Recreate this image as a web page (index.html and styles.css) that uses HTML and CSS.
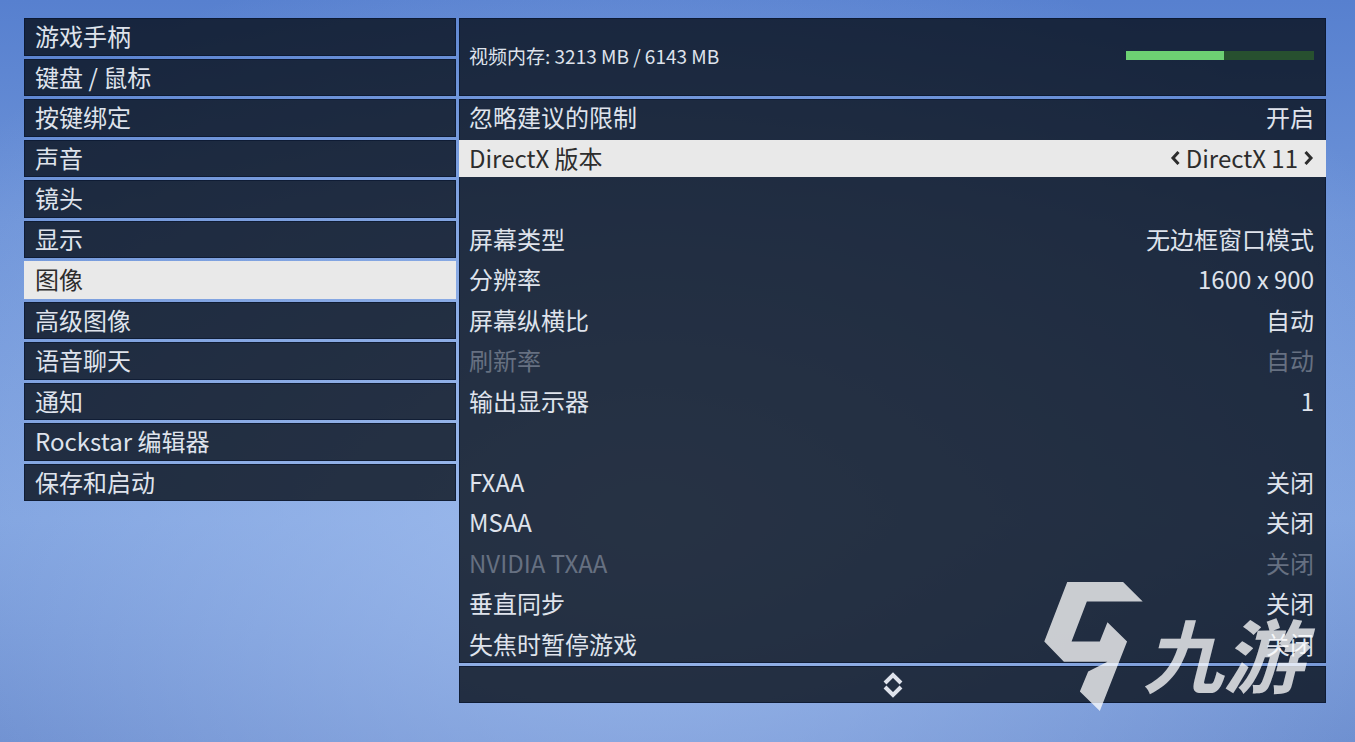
FILE: index.html
```
<!DOCTYPE html>
<html lang="zh-CN">
  <head>
    <meta charset="utf-8">
    <title>图像</title>
    <link rel="stylesheet" href="styles.css">
  </head>
  <body>
    <div class="settings">
      <nav class="menu">
        <button class="menu-item">游戏手柄</button>
        <button class="menu-item">键盘 / 鼠标</button>
        <button class="menu-item">按键绑定</button>
        <button class="menu-item">声音</button>
        <button class="menu-item">镜头</button>
        <button class="menu-item">显示</button>
        <button class="menu-item active">图像</button>
        <button class="menu-item">高级图像</button>
        <button class="menu-item">语音聊天</button>
        <button class="menu-item">通知</button>
        <button class="menu-item">Rockstar 编辑器</button>
        <button class="menu-item">保存和启动</button>
      </nav>

      <main class="content">
        <div class="memory panel">
          <label for="memory-bar">视频内存: 3213 MB / 6143 MB</label>
          <progress id="memory-bar" value="3213" max="6143"></progress>
        </div>

        <div class="options panel">
          <button class="option"><span>忽略建议的限制</span><span>开启</span></button>
          <div class="option active">
            <span>DirectX 版本</span>
            <div class="picker">
              <button class="arrow" aria-label="上一个">
                <svg width="10" height="14" viewBox="0 0 10 14"><path d="M8.500 1 3 7l5.500 6"/></svg>
              </button>
              <span>DirectX 11</span>
              <button class="arrow" aria-label="下一个">
                <svg width="10" height="14" viewBox="0 0 10 14"><path d="M1.500 1 7 7l-5.500 6"/></svg>
              </button>
            </div>
          </div>
          <div class="spacer"></div>
          <button class="option"><span>屏幕类型</span><span>无边框窗口模式</span></button>
          <button class="option"><span>分辨率</span><span>1600 x 900</span></button>
          <button class="option"><span>屏幕纵横比</span><span>自动</span></button>
          <button class="option" disabled><span>刷新率</span><span>自动</span></button>
          <button class="option"><span>输出显示器</span><span>1</span></button>
          <div class="spacer"></div>
          <button class="option"><span>FXAA</span><span>关闭</span></button>
          <button class="option"><span>MSAA</span><span>关闭</span></button>
          <button class="option" disabled><span>NVIDIA TXAA</span><span>关闭</span></button>
          <button class="option"><span>垂直同步</span><span>关闭</span></button>
          <button class="option"><span>失焦时暂停游戏</span><span>关闭</span></button>
        </div>

        <button class="scroll panel" aria-label="滚动">
          <svg width="20" height="26" viewBox="0 0 20 26"><path d="M2 11 10 3l8 8M2 15l8 8 8-8"/></svg>
        </button>
      </main>
    </div>

    <div class="watermark">
      <svg width="99" height="129" viewBox="43 66 296 388">
        <path d="M112 66H280L339 125H171L125 245H210L233 187 292 245 210 454 150 395 175 335 233 306H102L43 245Z"/>
      </svg>
      <span>九游</span>
    </div>
  </body>
</html>
```

FILE: styles.css
```
* {
  box-sizing: border-box;
}

body {
  position: relative;
  min-height: 100vh;
  margin: 0;
  padding: 18px 29px 39px 24px;
  background:
    radial-gradient(ellipse 65% 80% at 48% 70%, rgba(164, 192, 240, 0.85), rgba(140, 172, 230, 0) 100%),
    linear-gradient(to bottom, #5780cf 0%, #6d93d8 30%, #7b9fdd 70%, #698bcd 100%);
  color: #dfe3ec;
  font-family: "Noto Sans CJK SC", sans-serif;
  font-size: 24px;
  line-height: 34px;
}

button {
  padding: 0;
  border: 0;
  background: none;
  color: inherit;
  font: inherit;
  text-align: left;
  cursor: pointer;
}

svg {
  display: block;
}

.settings {
  display: grid;
  grid-template-columns: 432fr 867fr;
  gap: 3px;
  align-items: start;
}

.menu {
  display: grid;
  grid-auto-rows: 1fr;
  gap: 3px;
  min-height: 483px;
}

.menu-item,
.panel {
  background-color: rgba(5, 12, 20, 0.78);
  box-shadow: inset 0 0 0 1px rgba(5, 18, 45, 0.6);
}

.menu-item {
  padding: 0 11px 1px;
}

.content {
  display: grid;
  gap: 3px;
}

.memory {
  display: flex;
  align-items: center;
  justify-content: space-between;
  height: 78px;
  padding: 0 12px 3px 10px;
  font-size: 19px;
}

progress {
  width: 188px;
  height: 9px;
  border: 0;
  appearance: none;
  background-color: #27502f;
}
progress::-webkit-progress-bar {
  background-color: #27502f;
}
progress::-webkit-progress-value {
  background-color: #6dd073;
}

.options {
  display: grid;
  grid-auto-rows: 1fr;
  gap: 3px;
  min-height: 564px;
}

.option {
  display: flex;
  align-items: center;
  justify-content: space-between;
  padding: 0 12px 1px 10px;
}
.option:disabled {
  color: #667081;
  cursor: default;
}

.menu-item.active,
.option.active {
  background-color: #e9e9e9;
  box-shadow: none;
  color: #2d2d2d;
}

.picker {
  display: flex;
  align-items: center;
  gap: 6px;
}

.arrow path,
.scroll path {
  fill: none;
  stroke: currentColor;
  stroke-width: 3;
}

.scroll {
  display: flex;
  align-items: center;
  justify-content: center;
  height: 37px;
}
.scroll path {
  stroke-width: 4;
}

.watermark {
  position: absolute;
  right: 52px;
  bottom: 31px;
  display: flex;
  align-items: center;
  color: #fff;
  opacity: 0.76;
  font-size: 80px;
  font-style: italic;
  font-weight: 700;
  line-height: 80px;
  pointer-events: none;
}
.watermark svg {
  fill: currentColor;
}
.watermark span {
  padding-top: 10px;
}
```
